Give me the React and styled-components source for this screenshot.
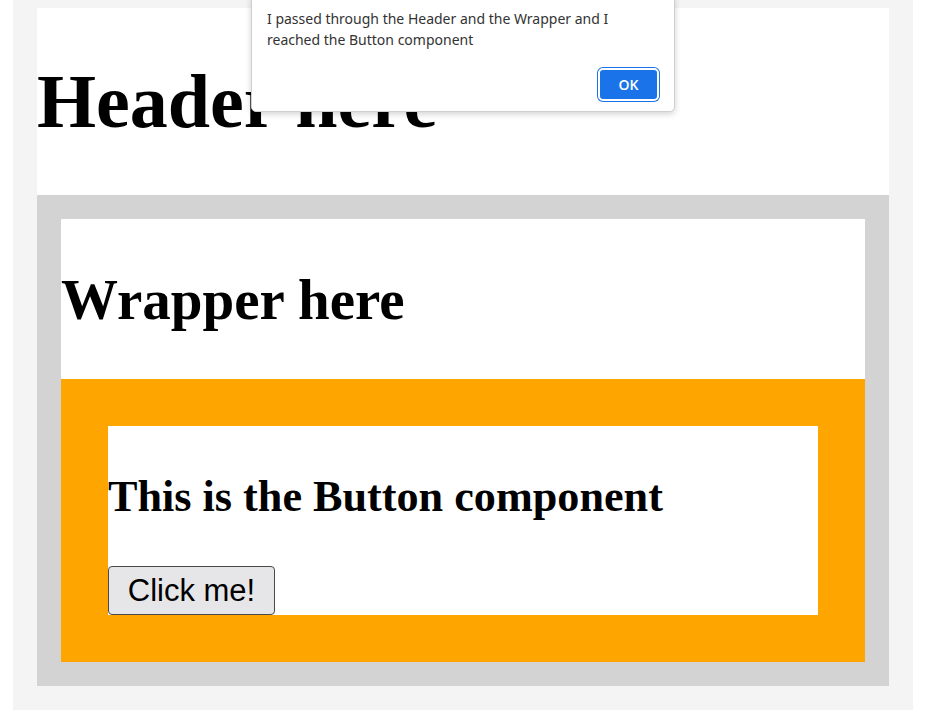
import React from "react";
import styled, { createGlobalStyle } from "styled-components";

const GlobalStyle = createGlobalStyle`
  body {
    margin: 0;
    background: #ffffff;
    font-family: "Liberation Serif", "Times New Roman", serif;
  }
`;

const Page = styled.div`
  position: relative;
  width: 930px;
  height: 722px;
`;

const Outer = styled.div`
  margin-left: 13px;
  width: 900px;
  box-sizing: border-box;
  padding: 8px 24px 24px;
  background-color: #f4f4f4;
`;

const Header = styled.header`
  background-color: #ffffff;
  height: 187px;
  overflow: hidden;
`;

const HeaderTitle = styled.h1`
  margin: 50px 0 0;
  font-size: 76px;
  line-height: 86px;
  font-weight: 700;
  color: #000;
`;

const Wrapper = styled.div`
  background-color: lightgray;
  padding: 24px;
`;

const WrapperInner = styled.div`
  background-color: #ffffff;
`;

const WrapperTitle = styled.h1`
  margin: 0;
  padding: 49px 0 47px;
  font-size: 57px;
  line-height: 64px;
  font-weight: 700;
  color: #000;
`;

const OrangeBox = styled.div`
  background-color: orange;
  padding: 47px;
`;

const ButtonCard = styled.div`
  background-color: #ffffff;
  display: flex;
  flex-direction: column;
  align-items: flex-start;
`;

const CardTitle = styled.h2`
  margin: 46px 0 44px;
  font-size: 44.2px;
  line-height: 50px;
  font-weight: 700;
  color: #000;
`;

const ClickButton = styled.button`
  height: 49px;
  width: 167px;
  padding: 0;
  font-family: "Liberation Sans", Arial, sans-serif;
  font-size: 31px;
  color: #000;
  background-color: #e6e6e8;
  border: 1px solid #4a4a4a;
  border-radius: 4px;
`;

const Alert = styled.div`
  position: absolute;
  top: -6px;
  left: 251px;
  width: 424px;
  height: 118px;
  box-sizing: border-box;
  background: #ffffff;
  border: 1px solid #cfcfcf;
  border-radius: 5px;
  box-shadow: 0 2px 6px rgba(0, 0, 0, 0.18);
  padding: 13px 15px 0;
  font-family: "Noto Sans", "Open Sans", sans-serif;
  display: flex;
  flex-direction: column;
`;

const AlertText = styled.p`
  margin: 0;
  font-size: 14px;
  line-height: 21px;
  color: #333333;
`;

const AlertActions = styled.div`
  display: flex;
  justify-content: flex-end;
  margin-top: 18px;
`;

const OkButton = styled.button`
  width: 61px;
  height: 33px;
  box-sizing: border-box;
  background-color: #1a73e8;
  color: #ffffff;
  font-family: "Open Sans", "Noto Sans", sans-serif;
  font-weight: 600;
  font-size: 14px;
  border: 2px solid #ffffff;
  border-radius: 5px;
  box-shadow: 0 0 0 1px #1a73e8;
  padding: 0;
`;

export default function App() {
  return (
    <Page>
      <GlobalStyle />
      <Outer>
        <Header>
          <HeaderTitle>Header here</HeaderTitle>
        </Header>
        <Wrapper>
          <WrapperInner>
            <WrapperTitle>Wrapper here</WrapperTitle>
            <OrangeBox>
              <ButtonCard>
                <CardTitle>This is the Button component</CardTitle>
                <ClickButton>Click me!</ClickButton>
              </ButtonCard>
            </OrangeBox>
          </WrapperInner>
        </Wrapper>
      </Outer>
      <Alert>
        <AlertText>
          I passed through the Header and the Wrapper and I
          <br />
          reached the Button component
        </AlertText>
        <AlertActions>
          <OkButton>OK</OkButton>
        </AlertActions>
      </Alert>
    </Page>
  );
}
